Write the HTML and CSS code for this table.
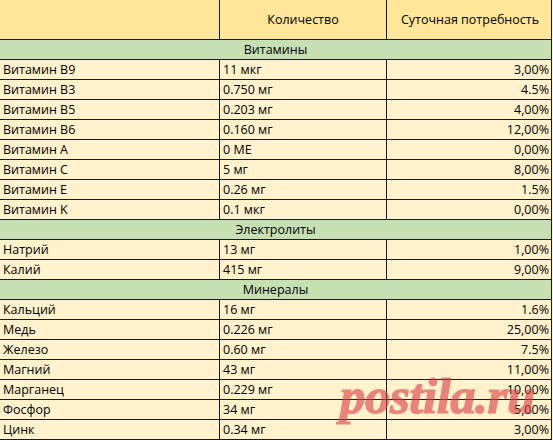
FILE: index.html
```html
<!DOCTYPE html>
<html lang="ru">
<head>
<meta charset="utf-8">
<title>Витамины и минералы</title>
<link rel="stylesheet" href="styles.css">
</head>
<body>
<div class="sheet">
<table class="grid">
  <tr class="head">
    <td class="c1"></td>
    <td class="c2 center">Количество</td>
    <td class="c3 center">Суточная потребность</td>
  </tr>
  <tr class="group"><td colspan="3">Витамины</td></tr>
  <tr><td class="c1">Витамин B9</td><td class="c2">11 мкг</td><td class="c3">3,00%</td></tr>
  <tr><td class="c1">Витамин B3</td><td class="c2">0.750 мг</td><td class="c3">4.5%</td></tr>
  <tr><td class="c1">Витамин B5</td><td class="c2">0.203 мг</td><td class="c3">4,00%</td></tr>
  <tr><td class="c1">Витамин B6</td><td class="c2">0.160 мг</td><td class="c3">12,00%</td></tr>
  <tr><td class="c1">Витамин A</td><td class="c2">0 МЕ</td><td class="c3">0,00%</td></tr>
  <tr><td class="c1">Витамин C</td><td class="c2">5 мг</td><td class="c3">8,00%</td></tr>
  <tr><td class="c1">Витамин E</td><td class="c2">0.26 мг</td><td class="c3">1.5%</td></tr>
  <tr><td class="c1">Витамин K</td><td class="c2">0.1 мкг</td><td class="c3">0,00%</td></tr>
  <tr class="group"><td colspan="3">Электролиты</td></tr>
  <tr><td class="c1">Натрий</td><td class="c2">13 мг</td><td class="c3">1,00%</td></tr>
  <tr><td class="c1">Калий</td><td class="c2">415 мг</td><td class="c3">9,00%</td></tr>
  <tr class="group"><td colspan="3">Минералы</td></tr>
  <tr><td class="c1">Кальций</td><td class="c2">16 мг</td><td class="c3">1.6%</td></tr>
  <tr><td class="c1">Медь</td><td class="c2">0.226 мг</td><td class="c3">25,00%</td></tr>
  <tr><td class="c1">Железо</td><td class="c2">0.60 мг</td><td class="c3">7.5%</td></tr>
  <tr><td class="c1">Магний</td><td class="c2">43 мг</td><td class="c3">11,00%</td></tr>
  <tr><td class="c1">Марганец</td><td class="c2">0.229 мг</td><td class="c3">10,00%</td></tr>
  <tr><td class="c1">Фосфор</td><td class="c2">34 мг</td><td class="c3">5,00%</td></tr>
  <tr><td class="c1">Цинк</td><td class="c2">0.34 мг</td><td class="c3">3,00%</td></tr>
</table>
<div class="watermark">postila.ru</div>
</div>
</body>
</html>
```
FILE: styles.css
```css
html, body {
  margin: 0;
  padding: 0;
  background: #fff2cc;
  overflow: hidden;
}
.sheet {
  position: relative;
  width: 553px;
  height: 440px;
  overflow: hidden;
}
.grid {
  border-collapse: separate;
  border-spacing: 0;
  table-layout: fixed;
  width: 552px;
  font-family: "Open Sans", "Liberation Sans", sans-serif;
  font-size: 12.5px;
  color: #000;
}
.grid td {
  height: 19px;
  padding: 0 3px 0 3px;
  border-bottom: 1px solid #1a1a1a;
  background: #fff2cc;
  white-space: nowrap;
  overflow: hidden;
  line-height: 19px;
  box-sizing: content-box;
}
.grid td.c1 { width: 213px; border-right: 1px solid #1a1a1a; }
.grid td.c2 { width: 160px; border-right: 1px solid #1a1a1a; }
.grid td.c3 { width: 158px; border-right: 1px solid #1a1a1a; text-align: right; padding-right: 2px; padding-left: 4px; }
.grid .head td {
  height: 39px;
  background: #ffe699;
  vertical-align: middle;
}
.grid td.center { text-align: center; }
.grid .group td {
  background: #c6e0b4;
  text-align: center;
  border-right: 1px solid #1a1a1a;
}
.watermark {
  position: absolute;
  left: 340px;
  top: 366px;
  font-family: "Liberation Serif", serif;
  font-weight: bold;
  font-style: italic;
  font-size: 51px;
  line-height: 60px;
  color: #dc3c44;
  -webkit-text-stroke: 1.2px #dc3c44;
  opacity: 0.6;
  letter-spacing: -0.5px;
  pointer-events: none;
}
```
